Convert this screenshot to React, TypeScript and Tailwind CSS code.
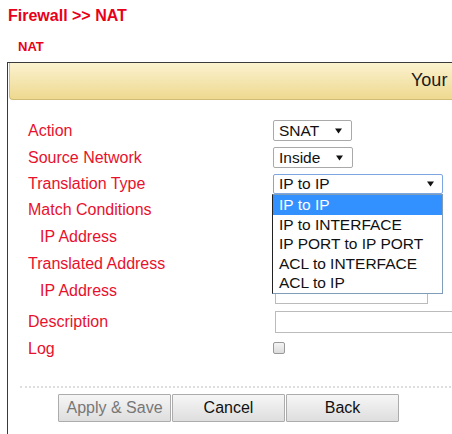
export default function App() {
  const options = ["IP to IP", "IP to INTERFACE", "IP PORT to IP PORT", "ACL to INTERFACE", "ACL to IP"];

  const label = "w-[245px] shrink-0 text-[16px] leading-[20px] text-[#e8112d]";

  return (
    <div className="w-[452px] h-[434px] overflow-hidden bg-white font-['Liberation_Sans',Arial,sans-serif]">
      <div className="pl-[8px] pt-[6px] text-[16px] leading-[20px] font-bold text-[#e8001a]">
        Firewall &gt;&gt; NAT
      </div>
      <div className="pl-[18px] mt-[13px] text-[13px] leading-[16px] font-bold text-[#e8001a]">NAT</div>

      <div className="ml-[7px] mt-[7px] w-[600px] h-[400px] border-l border-t border-[#3a3a3a]">
        <div className="ml-[1px] h-[37px] rounded-bl-[4px] border-b border-l border-[#d2bb74] bg-gradient-to-b from-[#fbf2cf] to-[#eed98f] pl-[401px] pt-[6px] text-[18px] leading-[22px] text-[#1a1a1a] whitespace-nowrap">
          Your
        </div>

        <div className="pl-[20px] pt-[17px]">
          <div className="flex items-center h-[27px]">
            <div className={label}>Action</div>
            <Select value="SNAT" width="w-[79px]" />
          </div>
          <div className="flex items-center h-[27px]">
            <div className={label}>Source Network</div>
            <Select value="Inside" width="w-[80px]" />
          </div>
          <div className="flex items-center h-[26px]">
            <div className={label}>Translation Type</div>
            <div className="relative z-10">
              <div className="w-[170px] h-[20px] flex items-center justify-between border border-[#7ea6e0] rounded-[2px] bg-white pl-[5px] pr-[8px] text-[15.5px] leading-[18px] text-[#111]">
                <span>IP to IP</span>
                <Arrow />
              </div>
              <div className="absolute left-[-1px] top-[20px] w-[171px] h-[100px] border border-[#7f9db9] border-l-[#222] bg-white">
                {options.map((o, i) => (
                  <div
                    key={o}
                    className={
                      "h-[19.6px] pl-[6px] text-[15.5px] leading-[19px] " +
                      (i === 0 ? "bg-[#3391ff] text-white" : "text-[#111]")
                    }
                  >
                    {o}
                  </div>
                ))}
              </div>
            </div>
          </div>
          <div className="flex items-center h-[26px]">
            <div className={label}>Match Conditions</div>
          </div>
          <div className="flex items-center h-[27px]">
            <div className={label + " pl-[12px]"}>IP Address</div>
            <div className="ml-[2px] w-[153px] h-[22px] border border-[#bbb]" />
          </div>
          <div className="flex items-center h-[27px]">
            <div className={label}>Translated Address</div>
          </div>
          <div className="flex items-center h-[27px]">
            <div className={label + " pl-[12px]"}>IP Address</div>
            <div className="ml-[2px] mt-[4px] w-[153px] h-[22px] border border-[#bbb]" />
          </div>
          <div className="flex items-center h-[27px] mt-[4px]">
            <div className={label}>Description</div>
            <div className="ml-[2px] w-[200px] h-[22px] border border-[#bbb]" />
          </div>
          <div className="flex items-center h-[28px]">
            <div className={label}>Log</div>
            <div className="w-[12px] h-[12px] -mt-[3px] rounded-[2px] border border-[#999] bg-gradient-to-b from-[#f4f4f4] to-[#dcdcdc]" />
          </div>
        </div>

        <div className="ml-[12px] mt-[23px] border-t-[2px] border-dotted border-[#dedede]" />

        <div className="ml-[50px] mt-[6px] flex">
          <Button text="Apply & Save" disabled />
          <Button text="Cancel" />
          <Button text="Back" />
        </div>
      </div>
    </div>
  );
}

function Arrow() {
  return (
    <svg width="7" height="6" viewBox="0 0 7 6" className="shrink-0">
      <path d="M0 0.5h7L3.5 5.5z" fill="#111" />
    </svg>
  );
}

function Select({ value, width }: { value: string; width: string }) {
  return (
    <div
      className={
        width +
        " h-[21px] flex items-center justify-between border border-[#a9a9a9] rounded-[2px] bg-white pl-[5px] pr-[9px] text-[15.5px] leading-[18px] text-[#111]"
      }
    >
      <span>{value}</span>
      <Arrow />
    </div>
  );
}

function Button({ text, disabled }: { text: string; disabled?: boolean }) {
  return (
    <div
      className={
        "w-[113px] h-[28px] mr-[1px] flex items-center justify-center border border-[#acacac] rounded-[1px] bg-gradient-to-b from-[#f6f6f6] to-[#dedede] text-[16px] " +
        (disabled ? "text-[#777]" : "text-[#111]")
      }
    >
      {text}
    </div>
  );
}
